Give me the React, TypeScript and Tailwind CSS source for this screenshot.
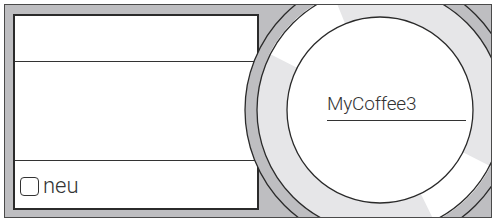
const CX = 380;
const CY = 110;

const pt = (r: number, deg: number) => {
  const a = (deg * Math.PI) / 180;
  return [CX + r * Math.sin(a), CY - r * Math.cos(a)];
};

const wedge = (r1: number, r2: number, a1: number, a2: number) => {
  const [ox1, oy1] = pt(r2, a1);
  const [ox2, oy2] = pt(r2, a2);
  const [ix2, iy2] = pt(r1, a2);
  const [ix1, iy1] = pt(r1, a1);
  return `M${ox1} ${oy1} A${r2} ${r2} 0 0 1 ${ox2} ${oy2} L${ix2} ${iy2} A${r1} ${r1} 0 0 0 ${ix1} ${iy1} Z`;
};

const Dial = () => (
  <svg className="absolute left-[-5px] top-[-5px]" width={495} height={220} viewBox="0 0 495 220">
    {/* outer housing */}
    <circle cx={CX} cy={CY} r={135} fill="#bebec1" stroke="#2a2a2a" strokeWidth={1.3} />
    {/* ring */}
    <circle cx={CX} cy={CY} r={123} fill="#e6e6e8" />
    <path d={wedge(92, 124, 297, 338)} fill="#ffffff" />
    <path d={wedge(92, 124, 117, 154)} fill="#ffffff" />
    <circle cx={CX} cy={CY} r={123} fill="none" stroke="#2a2a2a" strokeWidth={1.3} />
    {/* centre face */}
    <circle cx={CX} cy={CY} r={93} fill="#ffffff" stroke="#2a2a2a" strokeWidth={1.3} />
  </svg>
);

export default function App() {
  return (
    <div className="w-[495px] h-[220px] bg-white pt-[4px] pl-[4px]" style={{ fontFamily: "Roboto, 'Liberation Sans', sans-serif" }}>
      <div className="relative w-[488px] h-[214px] border border-[#4a4a4a] bg-[#bebec1] overflow-hidden pl-[8px] pt-[9px]">
        <div className="flex flex-col w-[246px] h-[196px] border-2 border-[#2b2b2b] bg-white">
          <div className="h-[46px] border-b-[1.5px] border-[#333]" />
          <div className="h-[99px] border-b-[1.5px] border-[#333]" />
          <div className="flex-1 flex items-center gap-[4px] pl-[5px] pt-[3px]">
            <span className="w-[19px] h-[19px] rounded-[4px] border-[1.3px] border-[#333]" />
            <span className="text-[22px] font-light text-[#333] leading-none">neu</span>
          </div>
        </div>
        <Dial />
        <div className="absolute left-[322px] top-[88px] w-[139px] border-b-[1.5px] border-[#333] pb-[3px]">
          <span className="text-[19px] font-light text-[#333] leading-none tracking-[-0.2px]">MyCoffee3</span>
        </div>
      </div>
    </div>
  );
}
